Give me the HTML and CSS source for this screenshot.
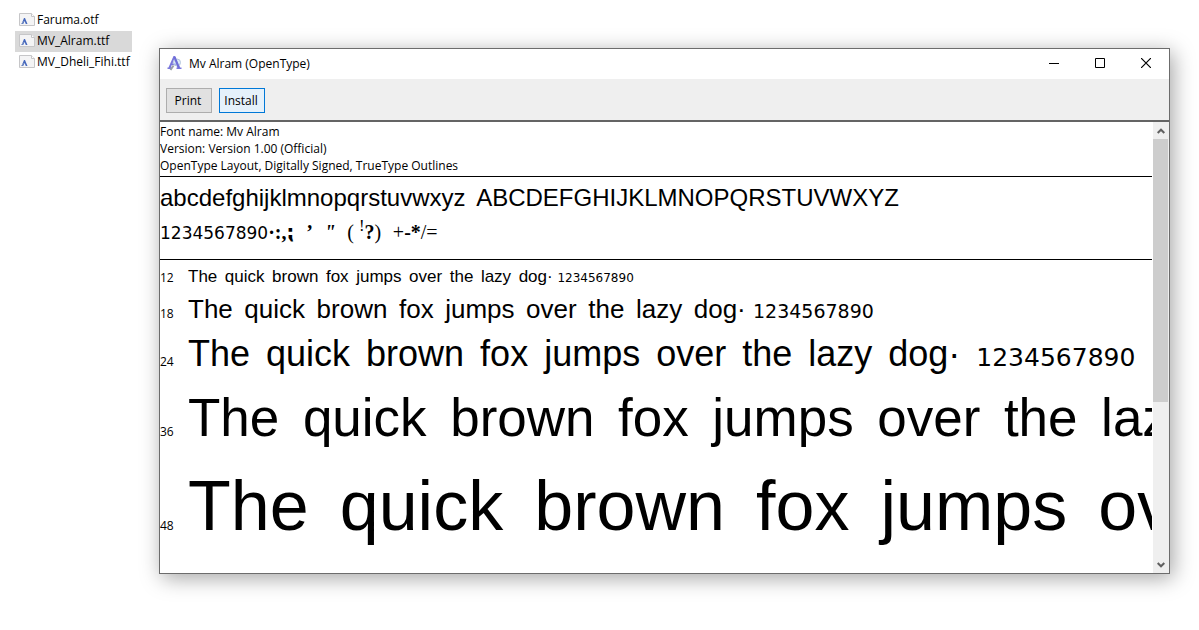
FILE: index.html
```html
<!DOCTYPE html>
<html lang="en">
<head>
<meta charset="utf-8">
<title>Mv Alram (OpenType)</title>
<link rel="stylesheet" href="styles.css">
</head>
<body>
<svg width="0" height="0" class="defs" aria-hidden="true">
  <symbol id="file" viewBox="0 0 16 13">
    <path d="M.5.5h12l3 3v9H.5z" fill="#f4f4f5" stroke="#c6c6c8"/>
    <path d="M12.5.5v3h3" fill="#fff" stroke="#c6c6c8"/>
    <path d="M2.500 11 5 5h1l2.500 6H6.800L5.600 8 4.200 11z" fill="#4668bd"/>
    <path d="M2.500 11 4.500 8.500" stroke="#8fa3c9"/>
  </symbol>
</svg>
<main class="desktop">
  <nav class="files" aria-label="Files">
    <a class="file" href="#"><svg class="file-icon"><use href="#file"/></svg>Faruma.otf</a>
    <a class="file file-selected" href="#"><svg class="file-icon"><use href="#file"/></svg>MV_Alram.ttf</a>
    <a class="file" href="#"><svg class="file-icon"><use href="#file"/></svg>MV_Dheli_Fihi.ttf</a>
  </nav>
  <section class="window">
    <header class="titlebar">
      <svg class="app-icon" viewBox="0 0 16 16" aria-hidden="true">
        <path d="M1.500 12.500 6.500 1h1.500l5 11.500h1.500V14H9.500v-1.500h1L9.500 10H4.800l-1 2.500h1V14H.5v-1.500zM5.500 8.500H9L7.200 4z" fill="#7a78dc"/>
        <circle cx="10" cy="7.500" r="3.500" fill="#c6e0f4" fill-opacity=".6" stroke="#b4c6dc"/>
        <path d="M7.500 2 12 13" stroke="#6f6dd8" stroke-width="2"/>
        <path d="M6.500 10.500 3.500 15" stroke="#9aa0a8" stroke-width="2"/>
      </svg>
      <h1 class="title">Mv Alram (OpenType)</h1>
      <div class="controls">
        <button class="control" aria-label="Minimize"><svg width="10" height="10"><path d="M0 5.500h10" stroke="#000"/></svg></button>
        <button class="control" aria-label="Maximize"><svg width="10" height="10"><path d="M.5.5h9v9h-9z" fill="none" stroke="#000"/></svg></button>
        <button class="control" aria-label="Close"><svg width="10" height="10"><path d="M0 0 10 10M10 0 0 10" stroke="#000" stroke-width="1.200"/></svg></button>
      </div>
    </header>
    <div class="toolbar">
      <button class="button">Print</button>
      <button class="button button-active">Install</button>
    </div>
    <div class="viewer">
      <div class="content">
        <div class="info">
          <p>Font name: Mv Alram</p>
          <p>Version: Version 1.00 (Official)</p>
          <p>OpenType Layout, Digitally Signed, TrueType Outlines</p>
        </div>
        <div class="glyphs">
          <p class="letters">abcdefghijklmnopqrstuvwxyz &#x2006;ABCDEFGHIJKLMNOPQRSTUVWXYZ</p>
          <p class="marks"><span class="numerals">1234567890</span><b>·:,⁏</b> &#x2004;<b>’</b> &#x2004;<b><i>"</i></b> &#x2004;( <sup>!</sup><b>?</b>) &#x2004;+<b>-*</b>/=</p>
        </div>
        <div class="samples">
          <div class="sample s12"><span class="size">12</span><p class="phrase">The &#x2006;quick &#x2006;brown &#x2006;fox &#x2006;jumps &#x2006;over &#x2006;the &#x2006;lazy &#x2006;dog· <span class="digits">1234567890</span></p></div>
          <div class="sample s18"><span class="size">18</span><p class="phrase">The &#x2006;quick &#x2006;brown &#x2006;fox &#x2006;jumps &#x2006;over &#x2006;the &#x2006;lazy &#x2006;dog· <span class="digits">1234567890</span></p></div>
          <div class="sample s24"><span class="size">24</span><p class="phrase">The &#x2006;quick &#x2006;brown &#x2006;fox &#x2006;jumps &#x2006;over &#x2006;the &#x2006;lazy &#x2006;dog· &#x2006;<span class="digits">1234567890</span></p></div>
          <div class="sample s36"><span class="size">36</span><p class="phrase">The &#x2006;quick &#x2006;brown &#x2006;fox &#x2006;jumps &#x2006;over &#x2006;the &#x2006;laz</p></div>
          <div class="sample s48"><span class="size">48</span><p class="phrase">The &#x2006;quick &#x2006;brown &#x2006;fox &#x2006;jumps &#x2006;ov</p></div>
        </div>
      </div>
      <div class="scrollbar">
        <button class="arrow" aria-label="Scroll up"><svg width="8" height="6"><path d="M.7 5 4 1.700 7.300 5" fill="none" stroke="#606060" stroke-width="2"/></svg></button>
        <div class="track"><div class="thumb"></div></div>
        <button class="arrow" aria-label="Scroll down"><svg width="8" height="6"><path d="M.7 1 4 4.300 7.300 1" fill="none" stroke="#606060" stroke-width="2"/></svg></button>
      </div>
    </div>
  </section>
</main>
</body>
</html>
```
FILE: styles.css
```css
* { box-sizing: border-box; }
body {
  margin: 0;
  background: #fff;
  color: #000;
  font: 12px/17px "Open Sans", "Noto Sans", sans-serif;
}
p, h1 { margin: 0; }
button { font: inherit; color: inherit; padding: 0; border: 0; background: none; }
.defs { position: absolute; }
.desktop {
  display: flex;
  gap: 27px;
  height: 100vh;
  padding-right: 29px;
  overflow: hidden;
}
.files { width: 117px; margin: 10px 0 0 15px; flex: none; }
.file {
  display: flex;
  align-items: center;
  gap: 2px;
  height: 21px;
  padding: 0 0 2px 4px;
  color: #000;
  text-decoration: none;
  white-space: nowrap;
}
.file-selected { background: #d9d9d9; }
.file-icon { width: 16px; height: 13px; flex: none; }
.window {
  flex: 1;
  min-width: 0;
  margin: 48px 0 56px;
  display: flex;
  flex-direction: column;
  border: 1px solid #6c6c6c;
  background: #fff;
  box-shadow: 3px 4px 20px rgba(0, 0, 0, .36);
}
.titlebar { display: flex; align-items: center; height: 30px; padding: 0 0 2px 7px; flex: none; }
.app-icon { width: 16px; height: 16px; margin-right: 6px; }
.title { font-size: 12px; font-weight: 400; flex: 1; }
.controls { display: flex; }
.control { display: grid; place-items: center; width: 46px; height: 28px; }
.toolbar {
  display: flex;
  gap: 7px;
  flex: none;
  padding: 9px 6px 7px;
  background: #efefef;
  border-bottom: 2px solid #646464;
}
.button { width: 46px; height: 25px; padding-right: 2px; border: 1px solid #adadad; background: #e1e1e1; }
.button-active { border-color: #0078d7; background: #e5f1fb; }
.viewer { display: flex; flex: 1; gap: 1px; min-height: 0; }
.content { flex: 1; min-width: 0; overflow: hidden; white-space: nowrap; }
.info { padding: 1px 0 2px; border-bottom: 1px solid #000; }
.glyphs { padding: 3px 0 8px; border-bottom: 1px solid #000; font-family: "Liberation Sans", Arial, sans-serif; }
.letters { font-size: 24px; line-height: 35px; }
.marks { font: 20px/35px "Liberation Serif", "DejaVu Sans", serif; }
.marks sup { line-height: 0; }
.numerals { font: 17px/35px "DejaVu Sans", sans-serif; }
.samples { padding-top: 4px; }
.sample { display: flex; align-items: baseline; }
.size { width: 28px; flex: none; }
.phrase { font-family: "Liberation Sans", Arial, sans-serif; }
.digits { font-family: "DejaVu Sans", sans-serif; line-height: 1; }
.s12 .phrase { font-size: 17px; line-height: 26px; }
.s18 .phrase { font-size: 26px; line-height: 38px; }
.s24 .phrase { font-size: 36px; line-height: 52px; }
.s36 .phrase { font-size: 53px; line-height: 76px; }
.s48 .phrase { font-size: 70px; line-height: 100px; }
.s12 .digits { font-size: 12px; }
.s18 .digits { font-size: 19px; }
.s24 .digits { font-size: 25px; }
.scrollbar { display: flex; flex-direction: column; width: 16px; flex: none; background: #efefef; }
.arrow { display: grid; place-items: center; height: 17px; }
.track { flex: 1; padding-right: 1px; }
.thumb { height: 63%; background: #cdcdcd; }
```
